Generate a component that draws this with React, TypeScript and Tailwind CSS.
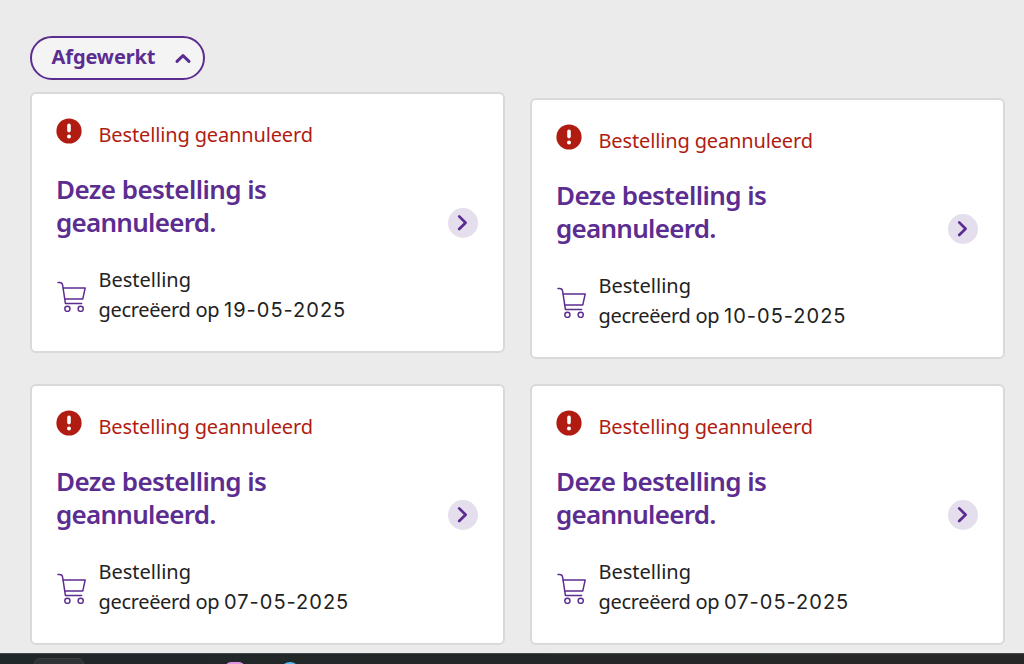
import React, { useState } from 'react';

function AlertIcon() {
    return (
        <svg className="w-[26px] h-[26px] shrink-0" viewBox="0 0 26 26">
            <circle cx="13" cy="13" r="12.6" fill="#b01c12" />
            <path d="M13 7.4V12.6" stroke="#fff" strokeWidth="3.6" strokeLinecap="round" />
            <circle cx="13" cy="18.4" r="2" fill="#fff" />
        </svg>
    );
}

function CartIcon() {
    return (
        <svg className="w-[30px] h-8 mt-[15px] self-start shrink-0" viewBox="0 0 30 32" fill="none"
            stroke="#5c2d91" strokeWidth="1.5" strokeLinecap="round" strokeLinejoin="round">
            <path d="M1 2.4H2.6C4.4 2.4 5.3 3.2 5.6 5L8.4 23.4H24.6" />
            <path d="M6.2 7.9H28.2L25.8 18.9H7.8" />
            <circle cx="10.4" cy="28.8" r="2.6" />
            <circle cx="23.7" cy="28.8" r="2.6" />
        </svg>
    );
}

function OrderCard({ date, className = '' }: { date: string; className?: string }) {
    return (
        <div className={`flex items-center justify-between w-[475px] h-[261px] bg-white
            border-2 border-[#d9d9d9] rounded-md pl-6 pr-[25px] ${className}`}>
            <div className="pb-px">
                <div className="flex items-center h-[30px]">
                    <div className="pb-[7px]"><AlertIcon /></div>
                    <span className="ml-[16.5px] text-xl leading-[30px] text-[#b01c12] tracking-[-0.14px]">Bestelling geannuleerd</span>
                </div>
                <h2 className="mt-[23px] w-[260px] text-[26px] leading-[33px] font-semibold text-[#5c2d91] tracking-[-0.57px]">
                    Deze bestelling is<br /><span className="tracking-[-0.73px]">geannuleerd.</span>
                </h2>
                <div className="flex items-center mt-[26px] ml-px text-xl leading-[30px] text-[#222]">
                    <CartIcon />
                    <div className="ml-[11.5px] whitespace-nowrap">
                        <p>Bestelling</p>
                        <p className="tracking-[-0.33px]">
                            gecreëerd op <span className="font-['Inter'] tracking-[1px]">{date}</span>
                        </p>
                    </div>
                </div>
            </div>
            <button className="flex items-center justify-center w-[30px] h-[30px] rounded-full bg-[#e5deed] shrink-0 cursor-pointer">
                <svg className="w-[30px] h-[30px]" viewBox="0 0 30 30" fill="none" stroke="#5c2d91"
                    strokeWidth="2.7" strokeLinecap="round" strokeLinejoin="round">
                    <path d="M11.2 8.4L17.6 14.7L11.2 21" />
                </svg>
            </button>
        </div>
    );
}

export default function App() {
    const [open, setOpen] = useState(true);

    return (
        <div className="flex flex-col h-[664px] overflow-hidden bg-[#ebebeb] font-['Noto_Sans',sans-serif]">
            <main className="h-[653px] shrink-0 pt-9 pl-[30px]">
                <button className="flex items-center justify-between w-[175px] h-11 pl-[19.5px] pr-2.5 rounded-full
                    border-2 border-[#5c2d91] bg-[#f4f4f4] text-[#5c2d91] cursor-pointer"
                    onClick={() => setOpen(!open)}>
                    <span className="text-xl leading-6 font-bold pb-0.5 tracking-[-0.1px]">Afgewerkt</span>
                    <svg className={open ? 'w-5 h-5' : 'w-5 h-5 rotate-180'} viewBox="0 0 20 20" fill="none"
                        stroke="currentColor" strokeWidth="3" strokeLinecap="round" strokeLinejoin="round">
                        <path d="M4 13.4L10 7.6L16 13.4" />
                    </svg>
                </button>
                {open && (
                    <div className="flex gap-[25px] mt-3">
                        <div className="flex flex-col gap-[31px]">
                            <OrderCard date="19-05-2025" />
                            <OrderCard date="07-05-2025" />
                        </div>
                        <div className="flex flex-col gap-[25px] mt-1.5">
                            <OrderCard date="10-05-2025" />
                            <OrderCard date="07-05-2025" />
                        </div>
                    </div>
                )}
            </main>
            <footer className="flex h-[11px] shrink-0 overflow-hidden border-t border-[#454b4b] bg-linear-to-r from-[#202729] to-[#272626]">
                <div className="w-[50px] h-8 ml-[34px] mt-1 rounded-md border border-[#3c4042] bg-[#303335] shrink-0" />
                <div className="w-5 h-5 ml-[141px] mt-2 rounded-md bg-[#dd94e6] shrink-0" />
                <div className="w-5 h-5 ml-[35px] mt-2 rounded-full bg-[#56bdf0] shrink-0" />
            </footer>
        </div>
    );
}
